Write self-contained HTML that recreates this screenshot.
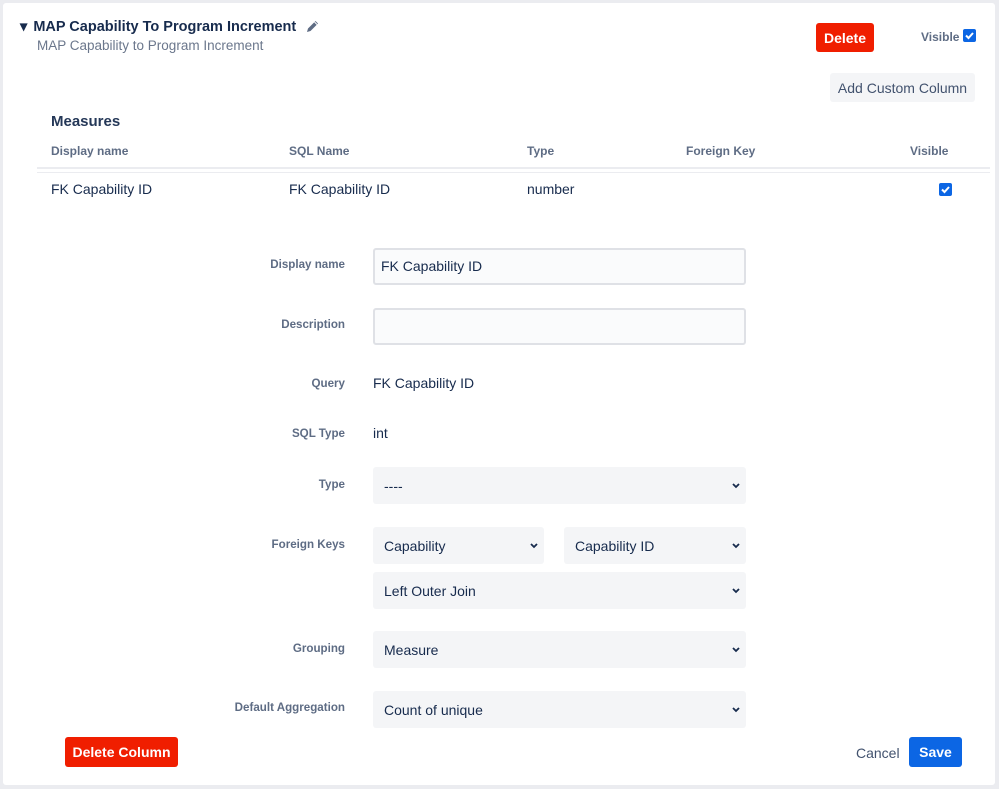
<!DOCTYPE html>
<html><head><meta charset="utf-8"><style>
*{box-sizing:border-box;margin:0;padding:0}
body{width:999px;height:789px;background:#ebecf0;font-family:"Liberation Sans",sans-serif;color:#172b4d;position:relative;overflow:hidden}
.card{position:absolute;left:3px;top:3px;width:992px;height:782px;background:#fff;border-radius:3px}
.a{position:absolute;white-space:nowrap}
.lbl{position:absolute;right:654px;font-size:11.6px;font-weight:bold;color:#5e6c84;text-align:right}
.th{position:absolute;top:144px;font-size:12px;font-weight:bold;color:#5e6c84}
.td{position:absolute;top:181px;font-size:14px;color:#172b4d}
.inp{position:absolute;background:#fafbfc;border:2px solid #dfe1e6;border-radius:3px;font-size:14px;padding:8px 6px;color:#172b4d}
.sel{position:absolute;background:#f4f5f7;border-radius:3px;font-size:14px;padding:0 11px;color:#172b4d;display:flex;align-items:center}
.sel svg{position:absolute;right:5px;top:50%;margin-top:-4px}
.btn{position:absolute;border-radius:3px;font-size:14px;font-weight:bold;color:#fff;display:flex;align-items:center;justify-content:center}
.cb{position:absolute;width:13px;height:13px;background:#0c66e4;border-radius:2px}
</style></head><body>
<div class="card"></div>
<div class="a" style="left:20px;top:19px;font-size:14.5px;font-weight:bold;color:#172b4d">▾ <span style="margin-left:2px">MAP Capability To Program Increment</span></div>
<svg class="a" style="left:305px;top:19px" width="15" height="15" viewBox="0 0 15 15"><path d="M2 13l1-3.5 7.5-7.5 2.5 2.5-7.5 7.5z" fill="#5e6c84"/><path d="M9.5 3l2.5 2.5" stroke="#fff" stroke-width="1"/></svg>
<div class="a" style="left:37px;top:38px;font-size:13.5px;color:#6b778c">MAP Capability to Program Increment</div>
<div class="btn" style="left:816px;top:23px;width:58px;height:29px;background:#f01e00">Delete</div>
<div class="a" style="left:921px;top:30px;font-size:12px;font-weight:bold;color:#5e6c84">Visible</div>
<div class="cb" style="left:963px;top:29px"><svg width="13" height="13" viewBox="0 0 13 13"><path d="M3 6.5l2.5 2.5 4.5-5" stroke="#fff" stroke-width="2" fill="none"/></svg></div>
<div class="btn" style="left:830px;top:73px;width:145px;height:29px;background:#f4f5f7;color:#42526e;font-weight:normal">Add Custom Column</div>
<div class="a" style="left:51px;top:113px;font-size:15px;font-weight:bold;color:#253858">Measures</div>
<div class="th" style="left:51px">Display name</div>
<div class="th" style="left:289px">SQL Name</div>
<div class="th" style="left:527px">Type</div>
<div class="th" style="left:686px">Foreign Key</div>
<div class="th" style="left:910px">Visible</div>
<div class="a" style="left:37px;top:167px;width:953px;height:2px;background:#ebecf0"></div>
<div class="a" style="left:37px;top:172px;width:953px;height:1px;background:#ebecf0"></div>
<div class="td" style="left:51px">FK Capability ID</div>
<div class="td" style="left:289px">FK Capability ID</div>
<div class="td" style="left:527px">number</div>
<div class="cb" style="left:939px;top:183px"><svg width="13" height="13" viewBox="0 0 13 13"><path d="M3 6.5l2.5 2.5 4.5-5" stroke="#fff" stroke-width="2" fill="none"/></svg></div>

<div class="lbl" style="top:258px">Display name</div>
<div class="inp" style="left:373px;top:248px;width:373px;height:37px">FK Capability ID</div>
<div class="lbl" style="top:318px">Description</div>
<div class="inp" style="left:373px;top:308px;width:373px;height:37px"></div>
<div class="lbl" style="top:377px">Query</div>
<div class="a" style="left:373px;top:375px;font-size:14px">FK Capability ID</div>
<div class="lbl" style="top:427px">SQL Type</div>
<div class="a" style="left:373px;top:425px;font-size:14px">int</div>
<div class="lbl" style="top:478px">Type</div>
<div class="sel" style="left:373px;top:467px;width:373px;height:37px">----<svg width="10" height="8" viewBox="0 0 10 8"><path d="M2 2l3 3 3-3" stroke="#172b4d" stroke-width="1.8" fill="none"/></svg></div>
<div class="lbl" style="top:538px">Foreign Keys</div>
<div class="sel" style="left:373px;top:527px;width:171px;height:37px">Capability<svg width="10" height="8" viewBox="0 0 10 8"><path d="M2 2l3 3 3-3" stroke="#172b4d" stroke-width="1.8" fill="none"/></svg></div>
<div class="sel" style="left:564px;top:527px;width:182px;height:37px">Capability ID<svg width="10" height="8" viewBox="0 0 10 8"><path d="M2 2l3 3 3-3" stroke="#172b4d" stroke-width="1.8" fill="none"/></svg></div>
<div class="sel" style="left:373px;top:572px;width:373px;height:37px">Left Outer Join<svg width="10" height="8" viewBox="0 0 10 8"><path d="M2 2l3 3 3-3" stroke="#172b4d" stroke-width="1.8" fill="none"/></svg></div>
<div class="lbl" style="top:642px">Grouping</div>
<div class="sel" style="left:373px;top:631px;width:373px;height:37px">Measure<svg width="10" height="8" viewBox="0 0 10 8"><path d="M2 2l3 3 3-3" stroke="#172b4d" stroke-width="1.8" fill="none"/></svg></div>
<div class="lbl" style="top:701px">Default Aggregation</div>
<div class="sel" style="left:373px;top:691px;width:373px;height:37px">Count of unique<svg width="10" height="8" viewBox="0 0 10 8"><path d="M2 2l3 3 3-3" stroke="#172b4d" stroke-width="1.8" fill="none"/></svg></div>

<div class="btn" style="left:65px;top:737px;width:113px;height:30px;background:#f01e00">Delete Column</div>
<div class="a" style="left:856px;top:745px;font-size:14px;color:#42526e">Cancel</div>
<div class="btn" style="left:909px;top:737px;width:53px;height:30px;background:#0c66e4">Save</div>
</body></html>
